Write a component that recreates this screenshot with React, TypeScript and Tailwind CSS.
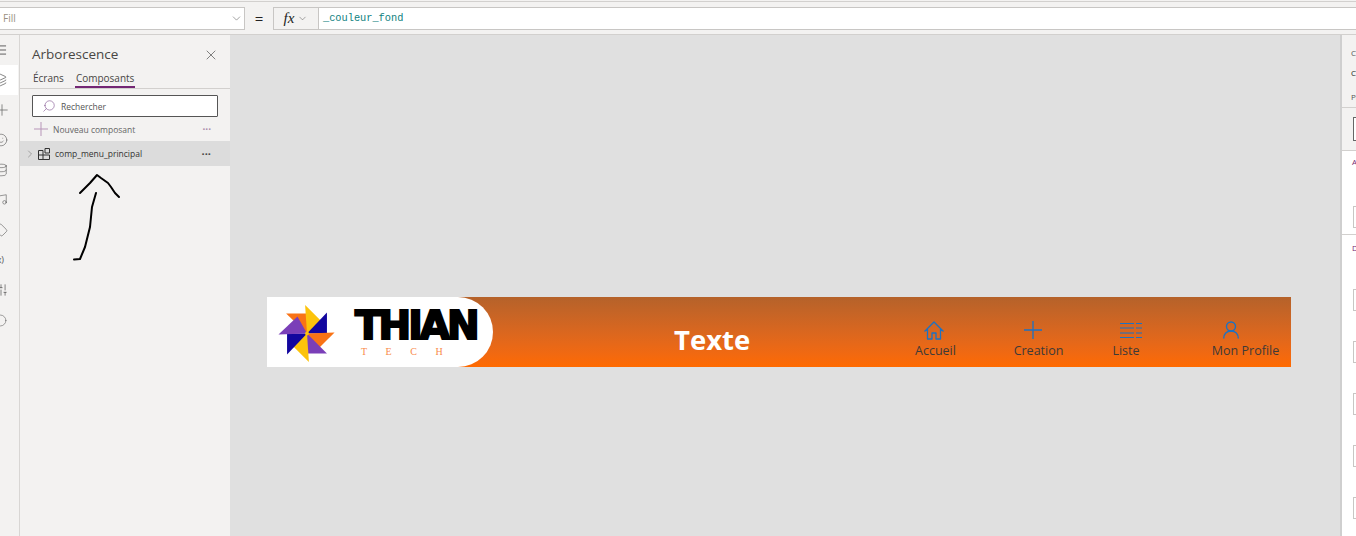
import { ChevronDown, ChevronRight, Database, Layers, Menu, Music, Plus, Search, Smile, SlidersVertical, Tag, X, Circle } from "lucide-react";

const font = "font-['Open_Sans','Liberation_Sans',sans-serif]";

const railIcons = [Smile, Database, Music, Tag];

function HomeIcon() {
  return (
    <svg width="20" height="19" viewBox="0 0 20 19" fill="none" stroke="#1b72c4" strokeWidth="1.300" strokeLinejoin="round">
      <path d="M.5 10.500L10 1l9.500 9.500M3.500 8v10h4.500v-6h4v6h4.500V8" />
    </svg>
  );
}

function CrossIcon() {
  return (
    <svg width="18" height="18" viewBox="0 0 18 18" fill="none" stroke="#1b72c4" strokeWidth="1.300">
      <path d="M9 0v18M0 9h18" />
    </svg>
  );
}

function ListIcon() {
  return (
    <svg width="22" height="17" viewBox="0 0 22 17" fill="none" stroke="#1b72c4" strokeWidth="1.200">
      <path d="M0 1.500h14M16 1.500h6M0 6h14M16 6h6M0 11h14M16 11h6M0 15.500h14M16 15.500h6" />
    </svg>
  );
}

function PersonIcon() {
  return (
    <svg width="16" height="18" viewBox="0 0 16 18" fill="none" stroke="#1b72c4" strokeWidth="1.400">
      <circle cx="8" cy="5.500" r="4.500" />
      <path d="M.7 17.500c0-4.500 3-7.500 7.300-7.500s7.300 3 7.300 7.500" />
    </svg>
  );
}

function Pinwheel() {
  return (
    <svg width="58" height="57" viewBox="0 0 60 60">
      <polygon points="30,30 8,9 30,9" fill="#f97316" />
      <polygon points="30,30 28,0 47,19" fill="#fcc30b" />
      <polygon points="30,30 51,8 51,30" fill="#12069e" />
      <polygon points="30,30 59,29 40,48" fill="#f97316" />
      <polygon points="30,30 51,51 30,51" fill="#7a3fb8" />
      <polygon points="30,30 32,60 13,41" fill="#fcc30b" />
      <polygon points="30,30 9,52 9,30" fill="#12069e" />
      <polygon points="30,30 0,31 20,12" fill="#7a3fb8" />
      <circle cx="30" cy="30" r="2" fill="#fcc30b" />
    </svg>
  );
}

function NavItem({ label, width, icon, className, iconClass }: { label: string; width: string; icon: React.ReactNode; className: string; iconClass: string }) {
  return (
    <div className={`flex flex-col items-center shrink-0 ${width} ${className}`}>
      <div className={`h-[24px] flex items-center justify-center ${iconClass}`}>{icon}</div>
      <span className="text-[12.500px] leading-[18px] text-[#3d3a38] whitespace-nowrap">{label}</span>
    </div>
  );
}

export default function App() {
  return (
    <div className={`w-[1356px] h-[536px] overflow-hidden flex flex-col bg-[#f3f2f1] ${font}`}>
      {/* top strip */}
      <div className="h-[4px] shrink-0 bg-[#f3f2f1] border-t border-t-[#f3f2f1]">
        <div className="h-px bg-[#d2d0ce]" />
      </div>

      {/* formula bar */}
      <div className="h-[31px] shrink-0 flex items-start pt-[3px] border-b border-[#d2d0ce]">
        <div className="w-[245px] h-[23px] flex items-center justify-between bg-white border border-[#c8c6c4] border-l-0 pl-[3px] pr-[1px]">
          <span className="text-[10px] text-[#9a8f80]">Fill</span>
          <ChevronDown size={13} strokeWidth={1} className="text-[#555]" />
        </div>
        <div className="w-[28px] h-[23px] flex items-center justify-center text-[15px] text-[#222]">=</div>
        <div className="w-[45px] h-[23px] flex items-center justify-center gap-[3px] border border-[#c8c6c4] border-r-0">
          <span className="font-['Liberation_Serif',serif] italic text-[15px] text-[#222]">fx</span>
          <ChevronDown size={11} strokeWidth={1} className="text-[#444]" />
        </div>
        <div className="flex-1 h-[23px] flex items-center bg-white border border-[#c8c6c4] border-r-0 pl-[4px]">
          <span className="font-['Liberation_Mono',monospace] text-[10.300px] text-[#0f7f80]">_couleur_fond</span>
        </div>
      </div>

      <div className="flex-1 flex min-h-0">
        {/* left rail */}
        <div className="w-[20px] shrink-0 border-r border-[#d8d6d4] overflow-hidden flex flex-col items-start text-[#555]">
          <div className="h-[30px] flex items-center -ml-[6px]">
            <Menu size={14} strokeWidth={1.200} className="text-[#222]" />
          </div>
          <div className="w-[18px] h-[30px] bg-white flex items-center">
            <Layers size={14} strokeWidth={1.100} className="-ml-[7px] text-[#444]" />
          </div>
          <div className="h-[30px] flex items-center -ml-[7px]">
            <Plus size={18} strokeWidth={1} className="text-[#666]" />
          </div>
          {railIcons.map((Icon, i) => (
            <div key={i} className="h-[30px] flex items-center -ml-[6px]">
              <Icon size={14} strokeWidth={1} />
            </div>
          ))}
          <div className="h-[30px] flex items-center -ml-[6px] text-[9px] text-[#555]">(x)</div>
          <div className="h-[30px] flex items-center -ml-[6px]">
            <SlidersVertical size={14} strokeWidth={1} className="text-[#333]" />
          </div>
          <div className="h-[30px] flex items-center -ml-[6px]">
            <Circle size={13} strokeWidth={1} />
          </div>
        </div>

        {/* tree panel */}
        <div className="relative w-[210px] shrink-0 flex flex-col">
          <div className="h-[34px] flex items-center justify-between pl-[12px] pr-[11px] pt-[5px]">
            <span className="text-[13.500px] text-[#484644]">Arborescence</span>
            <X size={16} strokeWidth={1} className="text-[#444]" />
          </div>
          <div className="h-[20px] flex gap-[12px] px-[13px] border-b border-[#d2d0ce] text-[10px] text-[#484644]">
            <span className="leading-[19px]">Écrans</span>
            <span className="h-[19px] px-[1px] -mx-[1px] leading-[19px] border-b-2 border-[#742774]">Composants</span>
          </div>
          <div className="mx-[12px] mt-[6px] h-[22px] flex items-center gap-[5px] bg-white border border-[#555] rounded-[1px] pl-[9px]">
            <Search size={14} strokeWidth={1} className="text-[#7a4a8a] -scale-x-100" />
            <span className="pt-[2px] text-[8.500px] text-[#555]">Rechercher</span>
          </div>
          <div className="h-[24px] flex items-center pl-[14px] pr-[19px]">
            <svg width="14" height="14" viewBox="0 0 14 14" stroke="#b795b8" strokeWidth="1">
              <path d="M7 0v14M0 7h14" />
            </svg>
            <span className="ml-[5px] pt-[2px] text-[8.500px] text-[#666] flex-1">Nouveau composant</span>
            <span className="text-[10px] leading-none text-[#a98aaa] font-bold">···</span>
          </div>
          <div className="h-[25px] flex items-center bg-[#dcdcdc] pl-[4px] pr-[19px]">
            <ChevronRight size={12} strokeWidth={1} className="text-[#666]" />
            <svg width="12" height="12" viewBox="0 0 12 12" fill="none" stroke="#333" strokeWidth="1" className="ml-[2px]">
              <path d="M.5 2.500h4.500v9H.5zM.5 7h11v4.500H5M7 .5h4.500V5H7z" />
            </svg>
            <span className="ml-[5px] pt-[2px] text-[8.500px] text-[#333] flex-1">comp_menu_principal</span>
            <span className="text-[11px] leading-none text-[#444] font-bold">···</span>
          </div>

          {/* hand drawn arrow */}
          <svg width="60" height="100" viewBox="0 0 60 100" fill="none" stroke="#000" strokeWidth="2" strokeLinecap="round" strokeLinejoin="round" className="absolute left-[50px] top-[136px]">
            <path d="M10 22l4-4 6-6 7-8 4 3 7 5 3 4 4 6 4 4" />
            <path d="M26 22l-4 14-1 10-1 10-5 20-5 12-6 .5" />
          </svg>
        </div>

        {/* canvas */}
        <div className="w-[1110px] shrink-0 bg-[#e0e0e0] pl-[37px] pt-[262px]">
          <div className="w-[1024px] h-[70px] flex items-center bg-gradient-to-b from-[#b5622a] to-[#ff6a00]">
            <div className="w-[226px] h-[70px] shrink-0 flex items-center bg-white rounded-r-[35px] pl-[11px]">
              <div className="mt-[2px]">
                <Pinwheel />
              </div>
              <div className="ml-[19px] mt-[2px] flex flex-col items-start">
                <span className="font-['DejaVu_Sans',sans-serif] font-bold text-[39px] leading-[36px] tracking-[-3px] text-black [-webkit-text-stroke:2px_#000] whitespace-nowrap">THIAN</span>
                <span className="ml-[6px] mt-[2px] font-['Liberation_Serif',serif] text-[10px] leading-[12px] tracking-[18.500px] text-[#f98a4b]">TECH</span>
              </div>
            </div>
            <span className="ml-[181px] mt-[16px] w-[76px] shrink-0 text-[27.500px] font-bold text-white leading-none whitespace-nowrap">Texte</span>
            <div className="flex items-center pt-[14px]">
              <NavItem className="ml-[165px]" iconClass="-translate-x-[2px]" width="w-[41px]" label="Accueil" icon={<HomeIcon />} />
              <NavItem className="ml-[58px]" iconClass="-translate-x-[6px]" width="w-[49px]" label="Creation" icon={<CrossIcon />} />
              <NavItem className="ml-[50px]" iconClass="translate-x-[5px]" width="w-[26px]" label="Liste" icon={<ListIcon />} />
              <NavItem className="ml-[73px]" iconClass="-translate-x-[15px]" width="w-[67px]" label="Mon Profile" icon={<PersonIcon />} />
            </div>
          </div>
        </div>

        {/* right properties pane, cut by the screen edge */}
        <div className="flex-1 border-l-2 border-[#cfcfcf] overflow-hidden flex flex-col bg-white text-[8px] text-[#555]">
          <div className="h-[73px] shrink-0 bg-[#f3f2f1] border-b border-[#d2d0ce] pl-[9px] pt-[8px] leading-[20px]">
            <div>C</div>
            <div className="text-[#222]">C</div>
            <div className="mt-[4px]">Pr</div>
          </div>
          <div className="h-[43px] shrink-0 bg-[#f3f2f1] border-b border-[#d2d0ce] pl-[11px] pt-[9px]">
            <div className="h-[24px] border border-[#666] border-r-0 bg-white" />
          </div>
          <div className="h-[84px] shrink-0 border-b border-[#d2d0ce] pl-[11px] pt-[5px] flex flex-col justify-between pb-[6px]">
            <span className="text-[#742774] leading-[12px] -ml-[1px]">A</span>
            <div className="h-[22px] border border-[#c8c6c4] border-r-0" />
          </div>
          <div className="flex-1 pl-[11px] pt-[7px]">
            <span className="block text-[#742774] leading-[12px] -ml-[1px]">D</span>
            <div className="mt-[35px] flex flex-col gap-[30px]">
              <div className="h-[22px] border border-[#c8c6c4] border-r-0" />
              <div className="h-[22px] border border-[#c8c6c4] border-r-0" />
              <div className="h-[22px] border border-[#c8c6c4] border-r-0" />
              <div className="h-[22px] border border-[#c8c6c4] border-r-0" />
              <div className="h-[22px] border border-[#c8c6c4] border-r-0" />
            </div>
          </div>
        </div>
      </div>
    </div>
  );
}
